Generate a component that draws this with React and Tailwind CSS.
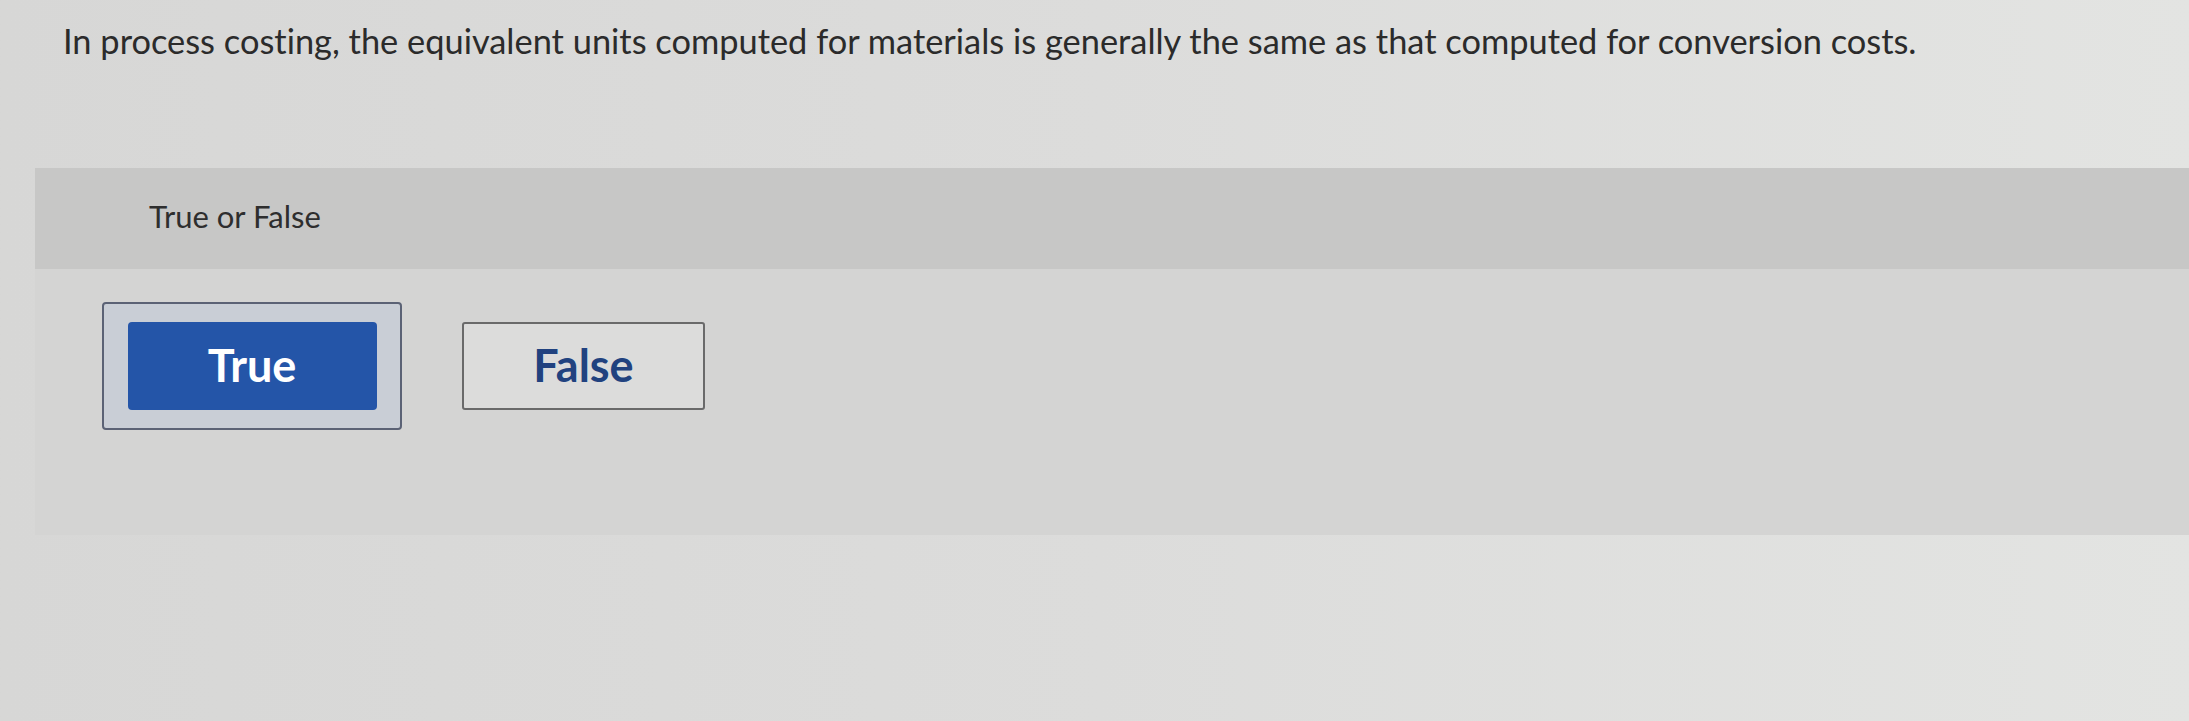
export default function App() {
  return (
    <div
      className="min-h-[721px] w-full bg-gradient-to-r from-[#d7d7d6] via-[#dcdcdb] to-[#e3e4e2] pt-[20px] pb-10 text-[#2b2b2b] [font-variant-ligatures:none]"
      style={{ fontFamily: 'Lato, "Open Sans", sans-serif' }}
    >
      <p className="ml-[63px] text-[34.4px] leading-[42px]">
        In process costing, the equivalent units computed for materials is generally the same as that computed for conversion costs.
      </p>

      <section className="ml-[35px] mt-[106px]">
        <div className="flex h-[101px] items-center bg-[#c7c7c6] pb-[4px] pl-[114px]">
          <span className="text-[31px] text-[#2e2e2e]">True or False</span>
        </div>

        <div className="flex h-[266px] items-start gap-[60px] bg-[#d4d4d3] pl-[67px] pt-[33px]">
          <div className="flex h-[128px] w-[300px] items-center justify-center rounded-[4px] border-2 border-[#5b6275] bg-[#c9ced6]">
            <button className="flex h-[88px] w-[249px] items-center justify-center rounded-[4px] bg-[#2455a8] text-[45px] font-bold text-white">
              True
            </button>
          </div>

          <button className="mt-[20px] flex h-[88px] w-[243px] items-center justify-center rounded-[3px] border-2 border-[#6a6a6a] bg-[#dcdcdb] text-[45px] font-bold text-[#21427f]">
            False
          </button>
        </div>
      </section>
    </div>
  )
}
